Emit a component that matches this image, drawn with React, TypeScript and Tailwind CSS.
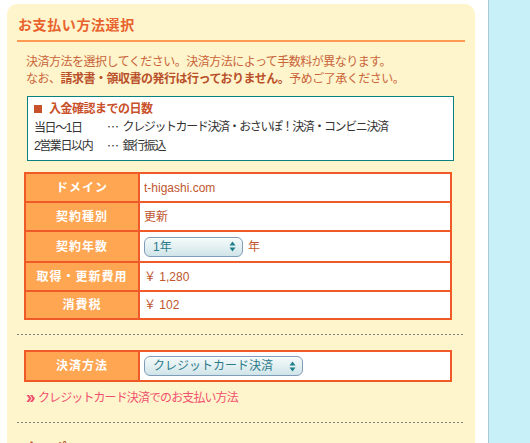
import React from "react";

const FONT = { fontFamily: '"Liberation Sans", "Noto Sans CJK JP", sans-serif' };
const CJK = { fontFamily: '"Noto Sans CJK JP", sans-serif' };

function Select({ label, width }: { label: string; width: string }) {
  return (
    <div
      className={`${width} h-[20px] flex items-center justify-between rounded-[6px] border border-[#7f9cb8] bg-gradient-to-b from-[#f4fafa] via-[#e4f0f2] to-[#cfe4e8] pl-[8px] pr-[6px] shadow-[inset_0_1px_0_#ffffff]`}
    >
      <span className="text-[12px] leading-none text-[#2a7a8a]">{label}</span>
      <svg width="7" height="11" viewBox="0 0 7 11">
        <path d="M3.5 0.5 L6.5 4.5 L0.5 4.5 Z" fill="#1f7f8c" />
        <path d="M3.5 10.5 L6.5 6.5 L0.5 6.5 Z" fill="#1f7f8c" />
      </svg>
    </div>
  );
}

function Row({
  label,
  children,
  h,
  first,
}: {
  label: string;
  children: React.ReactNode;
  h: string;
  first?: boolean;
}) {
  return (
    <div className={`flex ${h} ${first ? "" : "border-t-2 border-[#f05a28]"}`}>
      <div className="w-[114px] shrink-0 flex items-center justify-center bg-[#ffa652] border-r-2 border-[#f05a28] text-white font-bold text-[12px] tracking-[1px]">
        {label}
      </div>
      <div className="flex-1 flex items-center bg-white pl-[4px] text-[12px] text-[#c0562e]">
        {children}
      </div>
    </div>
  );
}

function Dotted() {
  return (
    <div className="h-px bg-[repeating-linear-gradient(to_right,#808080_0_2px,transparent_2px_4px)]" />
  );
}

export default function App() {
  return (
    <div className="w-[530px] h-[443px] overflow-hidden flex bg-white" style={FONT}>
      <div className="w-[488px] shrink-0 pl-[7px] pt-[4px] pr-[13px]">
        <div className="h-[600px] bg-[#fff5cc] rounded-t-[10px] px-[10px]">
          <h2 className="pt-[12px] pb-[6px] border-b-2 border-[#ff9a52] pl-[1px] text-[14px] leading-[18px] font-bold tracking-[0.6px] text-[#e8622c]">
            お支払い方法選択
          </h2>

          <div className="mt-[12px] pl-[9px] text-[12px] leading-[17px] tracking-[-0.5px] text-[#c8643a]">
            <p>決済方法を選択してください。決済方法によって手数料が異なります。</p>
            <p>
              なお、<span className="font-bold text-[#b8502a]">請求書・領収書の発行は行っておりません。</span>予めご了承ください。
            </p>
          </div>

          <div className="mt-[8px] ml-[10px] mr-[11px] border-[1.5px] border-[#0a8080] bg-white px-[6px] pt-[3px] pb-[5px] text-[12px] leading-[18px] tracking-[-1.4px]">
            <div className="flex items-center font-bold text-[#c8502a] tracking-[-0.5px]">
              <span className="inline-block w-[8px] h-[8px] bg-[#c8502a] mr-[7px]" />
              入金確認までの日数
            </div>
            <div className="flex text-[#333]">
              <span className="w-[73px]">
                当日<span style={CJK}>～</span>1日
              </span>
              <span className="mr-[5px]" style={CJK}>
                …
              </span>
              <span>クレジットカード決済・おさいぽ！決済・コンビニ決済</span>
            </div>
            <div className="flex text-[#333]">
              <span className="w-[73px]">2営業日以内</span>
              <span className="mr-[5px]" style={CJK}>
                …
              </span>
              <span>銀行振込</span>
            </div>
          </div>

          <div className="mt-[11px] ml-[7px] mr-[13px] border-2 border-[#f05a28]">
            <Row label="ドメイン" h="h-[27px]" first>
              t-higashi.com
            </Row>
            <Row label="契約種別" h="h-[29px]">
              更新
            </Row>
            <Row label="契約年数" h="h-[31px]">
              <Select label="1年" width="w-[99px]" />
              <span className="ml-[5px]">年</span>
            </Row>
            <Row label="取得・更新費用" h="h-[29px]">
              ￥ 1,280
            </Row>
            <Row label="消費税" h="h-[28px]">
              ￥ 102
            </Row>
          </div>

          <div className="mt-[14px]">
            <Dotted />
          </div>

          <div className="mt-[15px] ml-[7px] mr-[13px] border-2 border-[#f05a28]">
            <Row label="決済方法" h="h-[28px]" first>
              <Select label="クレジットカード決済" width="w-[159px]" />
            </Row>
          </div>

          <div className="mt-[8px] ml-[9px] flex items-center text-[12px] leading-[16px] tracking-[-0.9px] text-[#f0506e]">
            <svg width="9" height="9" viewBox="0 0 9 9" className="mr-[3px]">
              <path d="M0.5 1 L3 1 L5.5 4.5 L3 8 L0.5 8 L3 4.5 Z" fill="#f0506e" />
              <path d="M4 1 L6.5 1 L9 4.5 L6.5 8 L4 8 L6.5 4.5 Z" fill="#f0506e" />
            </svg>
            クレジットカード決済でのお支払い方法
          </div>

          <div className="mt-[16px]">
            <Dotted />
          </div>

          <h3 className="mt-[16px] pl-[8px] text-[14px] leading-[18px] font-bold text-[#b8562e]">
            クーポン
          </h3>
        </div>
      </div>
      <div className="flex-1 border-l border-[#a9c9d3] bg-[#c8f0f8]" />
    </div>
  );
}
